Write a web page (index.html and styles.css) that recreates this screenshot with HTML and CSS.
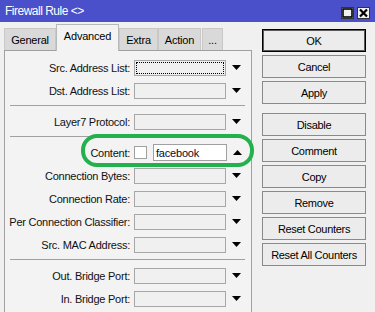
FILE: index.html
```html
<!DOCTYPE html>
<html>
<head>
<meta charset="utf-8">
<link rel="stylesheet" href="styles.css">
</head>
<body>
<div class="window">
  <div class="titlebar">
    <span class="title">Firewall Rule &lt;&gt;</span>
    <div class="wbtns">
      <span class="wbtn"><svg width="11" height="10" viewBox="0 0 11 10"><rect x="1" y="1" width="9" height="8" fill="none" stroke="#000" stroke-width="1.6"/></svg></span>
      <span class="wbtn"><svg width="11" height="10" viewBox="0 0 11 10"><path d="M2 1.5 L9 8.5 M9 1.5 L2 8.5" stroke="#000" stroke-width="2.2"/></svg></span>
    </div>
  </div>
  <div class="main">
    <div class="leftcol">
      <div class="tabs">
        <div class="tab t-general">General</div>
        <div class="tab active t-adv">Advanced</div>
        <div class="tab t-extra">Extra</div>
        <div class="tab t-action">Action</div>
        <div class="tab t-more">...</div>
      </div>
      <div class="panel">
        <div class="row"><span class="lbl">Src. Address List:</span><span class="box focus"><span class="focusring"></span></span><svg class="arr" width="9" height="5" viewBox="0 0 9 5"><polygon points="0,0 9,0 4.5,5" fill="#000"/></svg></div>
        <div class="row"><span class="lbl">Dst. Address List:</span><span class="box"></span><svg class="arr" width="9" height="5" viewBox="0 0 9 5"><polygon points="0,0 9,0 4.5,5" fill="#000"/></svg></div>
        <div class="sep"></div>
        <div class="row"><span class="lbl">Layer7 Protocol:</span><span class="box"></span><svg class="arr" width="9" height="5" viewBox="0 0 9 5"><polygon points="0,0 9,0 4.5,5" fill="#000"/></svg></div>
        <div class="sep"></div>
        <div class="row content-row"><span class="lbl">Content:</span><span class="chk"></span><span class="tbox">facebook</span><svg class="arr up" width="9" height="5" viewBox="0 0 9 5"><polygon points="0,5 9,5 4.5,0" fill="#000"/></svg>
          <div class="highlight"></div>
        </div>
        <div class="row"><span class="lbl">Connection Bytes:</span><span class="box"></span><svg class="arr" width="9" height="5" viewBox="0 0 9 5"><polygon points="0,0 9,0 4.5,5" fill="#000"/></svg></div>
        <div class="row"><span class="lbl">Connection Rate:</span><span class="box"></span><svg class="arr" width="9" height="5" viewBox="0 0 9 5"><polygon points="0,0 9,0 4.5,5" fill="#000"/></svg></div>
        <div class="row"><span class="lbl">Per Connection Classifier:</span><span class="box"></span><svg class="arr" width="9" height="5" viewBox="0 0 9 5"><polygon points="0,0 9,0 4.5,5" fill="#000"/></svg></div>
        <div class="row"><span class="lbl">Src. MAC Address:</span><span class="box"></span><svg class="arr" width="9" height="5" viewBox="0 0 9 5"><polygon points="0,0 9,0 4.5,5" fill="#000"/></svg></div>
        <div class="sep"></div>
        <div class="row"><span class="lbl">Out. Bridge Port:</span><span class="box"></span><svg class="arr" width="9" height="5" viewBox="0 0 9 5"><polygon points="0,0 9,0 4.5,5" fill="#000"/></svg></div>
        <div class="row"><span class="lbl">In. Bridge Port:</span><span class="box"></span><svg class="arr" width="9" height="5" viewBox="0 0 9 5"><polygon points="0,0 9,0 4.5,5" fill="#000"/></svg></div>
      </div>
    </div>
    <div class="rightcol">
      <div class="btn default">OK</div>
      <div class="btn">Cancel</div>
      <div class="btn">Apply</div>
      <div class="btn gap">Disable</div>
      <div class="btn">Comment</div>
      <div class="btn">Copy</div>
      <div class="btn">Remove</div>
      <div class="btn">Reset Counters</div>
      <div class="btn">Reset All Counters</div>
    </div>
  </div>
</div>
</body>
</html>
```
FILE: styles.css
```css
* { box-sizing: border-box; }
html, body { margin: 0; padding: 0; }
body {
  background: #f0f0f0;
  font-family: "Liberation Sans", Arial, sans-serif;
  font-size: 11px;
  color: #000;
}
.window {
  width: 375px;
  height: 312px;
  overflow: hidden;
  background: #f0f0f0;
}
.titlebar {
  height: 22px;
  background: #4a4fca;
  display: flex;
  align-items: center;
  padding: 0 5px 0 5px;
}
.title {
  color: #fff;
  font-size: 12px;
  letter-spacing: -0.5px;
}
.wbtns {
  margin-left: auto;
  display: flex;
  gap: 3px;
  margin-top: 4px;
}
.wbtn {
  width: 13px;
  height: 12px;
  background: #f0f0f0;
  border: 1px solid #333;
  display: flex;
  align-items: center;
  justify-content: center;
}
.main {
  display: flex;
  align-items: flex-start;
}
.leftcol {
  margin-left: 4px;
  width: 248px;
  display: flex;
  flex-direction: column;
}
.tabs {
  display: flex;
  height: 28px;
  align-items: flex-end;
  position: relative;
  z-index: 2;
}
.tab {
  height: 22px;
  background: #d9d9d9;
  border: 1px solid #c8c8c8;
  border-bottom: none;
  display: flex;
  align-items: center;
  justify-content: center;
  letter-spacing: -0.2px;
  padding-top: 1px;
}
.tab.active {
  height: 27px;
  background: #f3f3f3;
  border: 1px solid #b9b9b9;
  border-bottom: none;
  margin-bottom: -1px;
  padding-top: 0;
  padding-bottom: 5px;
}
.t-general { width: 52px; }
.t-adv { width: 63px; }
.t-extra { width: 39px; }
.t-action { width: 43px; }
.t-more { width: 21px; margin-left: 1px; }
.panel {
  border: 1px solid #a0a0a0;
  background: #f3f3f3;
  padding: 5px 0 0 0;
  height: 270px;
}
.row {
  height: 23px;
  display: flex;
  align-items: center;
  position: relative;
}
.lbl {
  width: 125px;
  text-align: right;
  letter-spacing: -0.25px;
  white-space: nowrap;
  color: #111;
}
.box {
  margin-left: 4px;
  width: 92px;
  height: 16px;
  border: 1px solid #a7a7a7;
  background: #f0f0f0;
  position: relative;
  display: block;
}
.box.focus { padding: 1px; }
.focusring {
  display: block;
  width: 100%;
  height: 100%;
  border: 1px dotted #000;
}
.arr { margin-left: 6px; }
.chk {
  margin-left: 4px;
  width: 13px;
  height: 13px;
  border: 1px solid #a0a0a0;
  background: #fff;
}
.tbox {
  margin-left: 6px;
  width: 74px;
  height: 17px;
  border: 1px solid #a0a0a0;
  background: #fff;
  padding-left: 2px;
  letter-spacing: -0.2px;
  display: flex;
  align-items: center;
  color: #0a0a2a;
}
.highlight {
  position: absolute;
  left: 76px;
  top: -7px;
  width: 173px;
  height: 33px;
  border: 4px solid #22b14c;
  border-radius: 16px;
}
.sep {
  height: 8px;
  margin: 0 6px 0 5px;
  padding-top: 3px;
}
.sep::before {
  content: "";
  display: block;
  height: 1px;
  background: #a0a0a0;
}
.rightcol {
  margin-left: 10px;
  padding-top: 7px;
  width: 104px;
  display: flex;
  flex-direction: column;
  gap: 3px;
}
.btn {
  height: 23px;
  border: 1px solid #8a8a8a;
  background: #ececec;
  display: flex;
  align-items: center;
  justify-content: center;
  letter-spacing: -0.3px;
  color: #000;
}
.btn.default {
  border: 1px solid #000;
  box-shadow: inset 0 0 0 1px #5a5a5a;
}
.btn.gap { margin-top: 6px; }
```
